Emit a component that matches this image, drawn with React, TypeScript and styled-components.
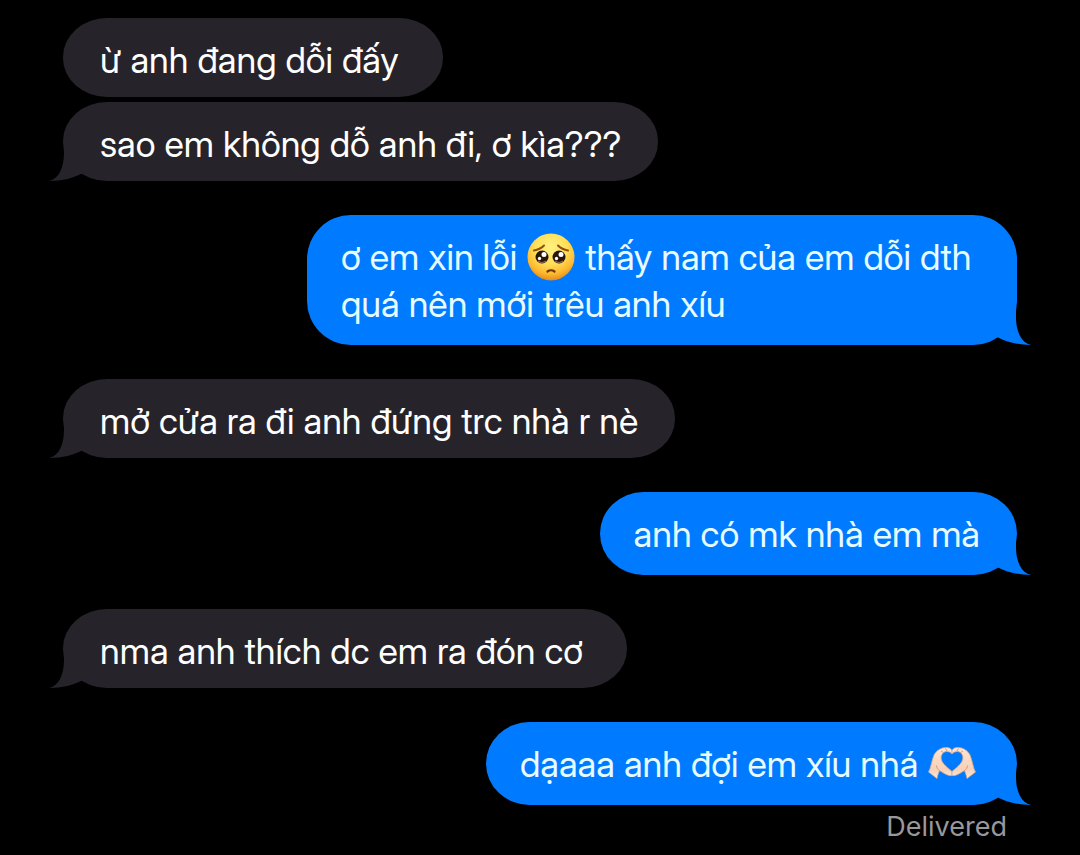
import React from "react";
import styled, { createGlobalStyle, css } from "styled-components";

type Side = "in" | "out";

const Page = createGlobalStyle`
  *, *::before, *::after { box-sizing: border-box; }
  html { background: #000; }
  body {
    margin: 0;
    background: #000;
    color: #fff;
    font-family: "Inter Display", Inter, "Noto Sans", sans-serif;
  }
`;

const Thread = styled.main`
  display: flex;
  flex-direction: column;
  gap: 34px;
  padding: 18px 63px 0;
`;

const Group = styled.section<{ $side: Side }>`
  display: flex;
  flex-direction: column;
  gap: 5px;
  align-items: ${(p) => (p.$side === "in" ? "flex-start" : "flex-end")};
`;

const incoming = css`
  padding: 19px 37px 13px;
  border-radius: 44px / 39px;
  background: #26242a;
`;

const outgoing = css<{ $multiline?: boolean }>`
  padding: 19px 37px 17px 34px;
  border-radius: ${(p) => (p.$multiline ? "44px" : "44px / 42px")};
  background: #007aff;
  color: #e6fcff;
`;

const Bubble = styled.div<{ $side: Side; $multiline?: boolean; $min?: number }>`
  position: relative;
  min-width: ${(p) => (p.$min ? `${p.$min}px` : "0")};
  max-width: 712px;
  font-size: 36px;
  line-height: 47px;
  ${(p) => (p.$side === "in" ? incoming : outgoing)}
`;

const TailShape = styled.svg<{ $side: Side }>`
  position: absolute;
  bottom: 0;
  width: 44px;
  height: 44px;
  ${(p) =>
    p.$side === "in"
      ? css`
          left: -14px;
          transform: scaleX(-1);
          fill: #26242a;
        `
      : css`
          right: -14px;
          fill: #007aff;
        `}
`;

const Text = styled.p`
  margin: 0;
`;

const Emoji = styled.svg`
  display: inline-block;
  width: 48px;
  height: 48px;
  margin: -8px 1px;
  vertical-align: -3px;
`;

const Status = styled.p`
  margin: 0 10px 0 0;
  font-family: Inter, "Noto Sans", sans-serif;
  font-size: 27px;
  line-height: 34px;
  color: #98989a;
`;

function Tail({ side }: { side: Side }) {
  return (
    <TailShape $side={side} viewBox="0 0 44 44" aria-hidden="true">
      <path d="M29 0V16C29 30 34 42 44 44C31 44 19 41 10 36C5 30 5 10 10 0Z" />
    </TailShape>
  );
}

function PleadingFace() {
  return (
    <Emoji viewBox="0 0 48 48" role="img" aria-label="🥺">
      <defs>
        <radialGradient id="face" cx="50%" cy="30%" r="70%">
          <stop offset="0" stopColor="#fff283" />
          <stop offset="0.5" stopColor="#ffdf55" />
          <stop offset="0.8" stopColor="#fcb830" />
          <stop offset="1" stopColor="#e58a1a" />
        </radialGradient>
      </defs>
      <circle cx="24" cy="24" r="23.5" fill="url(#face)" />
      <path
        d="M7 17.500Q13 16.500 17 12.500M41 17.500Q35 16.500 31 12.500"
        fill="none"
        stroke="#8b5210"
        strokeWidth="2"
        strokeLinecap="round"
      />
      <g fill="#2a1509">
        <circle cx="15" cy="24" r="6.500" />
        <circle cx="32" cy="24" r="6.500" />
      </g>
      <g fill="#fff">
        <circle cx="17" cy="21.500" r="2.500" />
        <circle cx="34" cy="21.500" r="2.500" />
        <circle cx="12.500" cy="25.500" r="1.700" />
        <circle cx="29.500" cy="25.500" r="1.700" />
      </g>
      <path d="M11 28Q15 31 19 28M28 28Q32 31 36 28" fill="none" stroke="#8a6a58" strokeWidth="1.200" />
      <path d="M20.500 38.500Q24 36 27.500 38.500" fill="none" stroke="#70330a" strokeWidth="2.200" strokeLinecap="round" />
    </Emoji>
  );
}

function HeartHands() {
  return (
    <Emoji viewBox="0 0 48 48" role="img" aria-label="🫶🏻">
      <defs>
        <linearGradient id="hands" x1="0" y1="0" x2="0" y2="1">
          <stop offset="0" stopColor="#fde6d6" />
          <stop offset="0.7" stopColor="#f8d0b6" />
          <stop offset="1" stopColor="#fce8dc" />
        </linearGradient>
        <g id="hand">
          <path
            d="M0.500 32C3 28 3.500 21 6 15C8 11 13 7.500 18 7.500C21.500 7.500 24 9 24 11.500V14C22 11.500 19 11 16.500 12C13.500 13.500 12.500 17 13.500 20C14.500 24 20 28 24 31.500V35.500C20 36.500 15 32.500 11.500 30.500C10.500 33 9.500 35.500 9 38.500Z"
            fill="url(#hands)"
            stroke="#dba98c"
            strokeWidth="0.800"
            strokeLinejoin="round"
          />
          <path d="M11.500 30.500C10 29.500 8.500 28 8.500 25.500M13 11L15.500 12.500M17.500 8.500L19 11" fill="none" stroke="#cf9474" strokeWidth="0.900" />
        </g>
      </defs>
      <use href="#hand" />
      <use href="#hand" transform="translate(48 0) scale(-1 1)" />
    </Emoji>
  );
}

export default function App() {
  return (
    <>
      <Page />
      <Thread>
        <Group $side="in">
          <Bubble $side="in" $min={380}>
            <Text>ừ anh đang dỗi đấy</Text>
          </Bubble>
          <Bubble $side="in">
            <Tail side="in" />
            <Text>sao em không dỗ anh đi, ơ kìa???</Text>
          </Bubble>
        </Group>
        <Group $side="out">
          <Bubble $side="out" $multiline $min={710}>
            <Tail side="out" />
            <Text>
              ơ em xin lỗi <PleadingFace /> thấy nam của em dỗi dth
              <br />
              quá nên mới trêu anh xíu
            </Text>
          </Bubble>
        </Group>
        <Group $side="in">
          <Bubble $side="in">
            <Tail side="in" />
            <Text>mở cửa ra đi anh đứng trc nhà r nè</Text>
          </Bubble>
        </Group>
        <Group $side="out">
          <Bubble $side="out">
            <Tail side="out" />
            <Text>anh có mk nhà em mà</Text>
          </Bubble>
        </Group>
        <Group $side="in">
          <Bubble $side="in" $min={564}>
            <Tail side="in" />
            <Text>nma anh thích dc em ra đón cơ</Text>
          </Bubble>
        </Group>
        <Group $side="out">
          <Bubble $side="out" $min={531}>
            <Tail side="out" />
            <Text>
              dạaaa anh đợi em xíu nhá <HeartHands />
            </Text>
          </Bubble>
          <Status>Delivered</Status>
        </Group>
      </Thread>
    </>
  );
}
